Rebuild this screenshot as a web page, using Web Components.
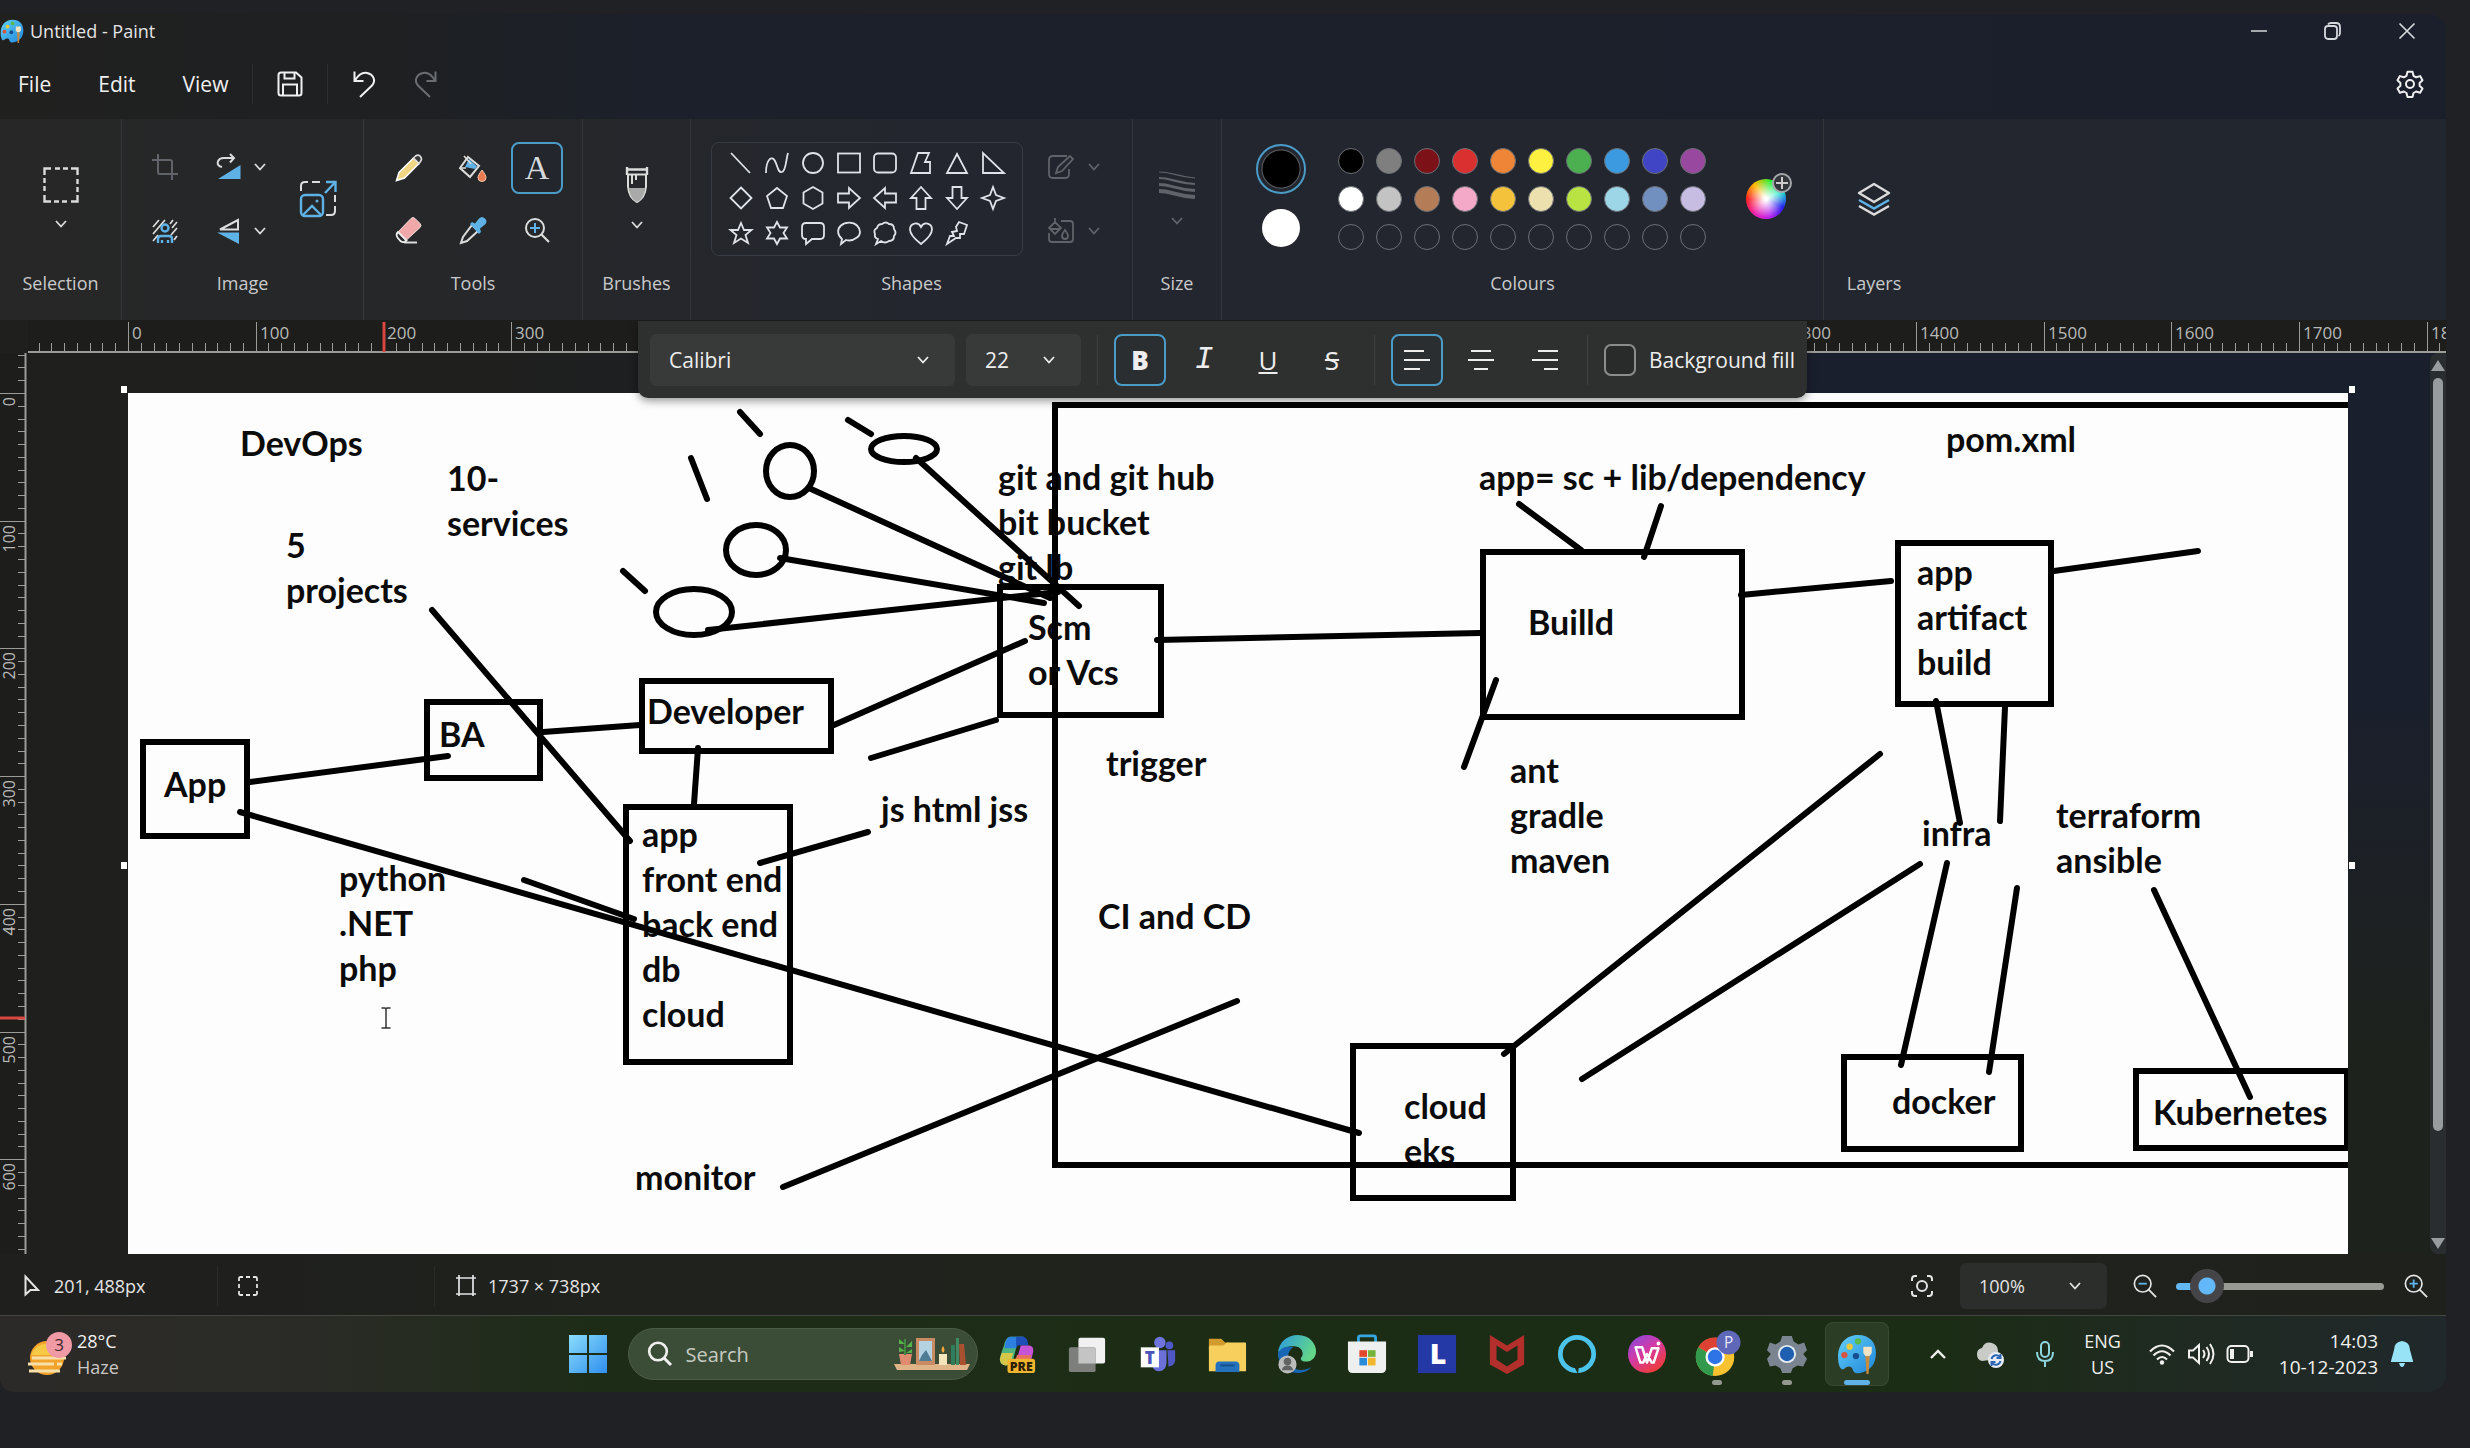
<!DOCTYPE html>
<html lang="en">
<head>
<meta charset="utf-8">
<title>Untitled - Paint</title>
<style>
  html, body { margin: 0; height: 100%; background: #202125; }
  body { font-family: "Open Sans", "Noto Sans", sans-serif; font-size: 18px; color: #e4e4e4; }
</style>
</head>
<body>
<paint-desktop>
  <paint-window></paint-window>
  <task-bar></task-bar>
</paint-desktop>
<script>
const BASE = `
  * { box-sizing: border-box; }
  button { all: unset; box-sizing: border-box; display: flex; align-items: center; justify-content: center; cursor: default; }
  select, input { font: inherit; color: inherit; }
`;
function define(name, render, after) {
  customElements.define(name, class extends HTMLElement {
    connectedCallback() {
      if (this.shadowRoot) return;
      const root = this.attachShadow({ mode: 'open' });
      const t = document.createElement('template');
      t.innerHTML = render(this);
      root.append(t.content.cloneNode(true));
      if (after) after(this, root);
    }
  });
}

/* ---------- icons ---------- */
const BLUE = '#5fb2e6';
const ICONS = {
  chev: [14, 14, '<path d="M2 4l5 5.5L12 4" stroke-width="1.8"/>'],
  caret: [18, 14, '<path d="M2 11l7-7 7 7" stroke-width="2.4"/>'],
  palette: [38, 38, `<defs><linearGradient id="p" x1="0" y1="0" x2="1" y2="1"><stop offset="0" stop-color="#62d0f5"/><stop offset="1" stop-color="#1f86dc"/></linearGradient></defs>
    <path d="M20 1C8 1 1 10 1 22c0 9 3 13 6 11 3-3 7-3 8 1 1 3 3 4 7 3 10-2 15-9 15-19S31 1 20 1z" fill="url(#p)" stroke="none"/>
    <circle cx="7" cy="20" r="3" fill="#d8543e" stroke="none"/><circle cx="12" cy="12" r="3" fill="#e9c93b" stroke="none"/><circle cx="20" cy="7" r="3" fill="#57b94e" stroke="none"/><circle cx="18" cy="21" r="3" fill="#174d8f" stroke="none"/>
    <path d="M25 12h8v6l-2 3h-4l-2-3z" fill="#f1e3c4" stroke="none"/><path d="M27 21h4l-1 17h-2z" fill="#c88a3d" stroke="none"/>`],
  min: [18, 18, '<path d="M1 9h16" stroke-width="1.6"/>'],
  restore: [18, 18, '<rect x="1" y="4" width="12" height="13" rx="3" stroke-width="1.8"/><path d="M4 2.5C5 1 6 1 7 1h5c3 0 4 2 4 4v6c0 2-.5 2.500-1.500 3" stroke-width="1.800"/>'],
  close: [18, 18, '<path d="M1.500 1.500l15 15M16.500 1.500l-15 15" stroke-width="1.700"/>'],
  gear: [28, 28, '<path d="M11.500 1.800h5l1 4 2.600 1.500 4-1.200 2.400 4.200-2.900 2.700v2.800l2.900 2.700-2.400 4.200-4-1.200-2.600 1.500-1 4h-5l-1-4-2.600-1.500-4 1.200-2.400-4.200 2.900-2.700V13L1.500 10.300l2.400-4.200 4 1.200 2.600-1.500z" stroke-width="2" stroke-linejoin="round"/><circle cx="14" cy="14" r="4" stroke-width="2"/>'],
  save: [26, 26, '<path d="M4 1.500h15l5.500 5V22c0 2-1 2.500-2.500 2.500H4C2 24.500 1.500 23 1.500 22V4C1.500 2.500 2.500 1.500 4 1.500z" stroke-width="2"/><path d="M7.500 2v5.500h10V2M6 24V13.500h14V24" stroke-width="2"/>'],
  undo: [26, 28, '<path d="M2.500 1.500v9.500h9M3 10.500c3-5 7-8.500 12-7.500 7 1.500 9 8 5 12.500L8 27" stroke-width="2"/>'],
  redo: [26, 28, '<path d="M23.500 1.500v9.500h-9M23 10.500c-3-5-7-8.500-12-7.500-7 1.500-9 8-5 12.500L18 27" stroke-width="2"/>'],
  select: [36, 36, '<path d="M1.500 8V1.500H8M12 1.500h5M20 1.500h5M28 1.500h6.500V8M34.500 12v5M34.500 20v5M34.500 28v6.500H28M24 34.500h-5M16 34.500h-5M8 34.500H1.500V28M1.500 24v-5M1.500 16v-5" stroke-width="2.400"/>'],
  selsmall: [20, 20, '<path d="M1 5V2.500Q1 1 2.500 1H5M8 1h4M15 1h2.500Q19 1 19 2.500V5M19 8v4M19 15v2.500q0 1.500-1.500 1.500H15M12 19H8M5 19H2.500Q1 19 1 17.500V15M1 12V8" stroke-width="1.800"/>'],
  crop: [26, 26, '<path d="M6 0v18q0 2 2 2h18M0 6h18q2 0 2 2v18" stroke-width="2"/>'],
  rotate: [26, 26, `<path d="M6 13C-1 12 1 4 8 4h9M14 0l4 4-4 4.500" stroke-width="2"/><path d="M24.500 11v14H2z" fill="${BLUE}" stroke="none"/>`],
  flip: [26, 26, `<path d="M22 2v9.500H4z" stroke-width="2"/><path d="M23 14.500V26L1 14.500z" fill="${BLUE}" stroke="none"/>`],
  removebg: [26, 24, `<path d="M1 8l6-7M1 15L13 1M1 22l5-6M18 5l3-4M20 9l5-6M19 16l6-7M22 21l3-4" stroke-width="1.700"/><circle cx="13" cy="9" r="3.500" stroke="${BLUE}" stroke-width="2.400"/><path d="M6 24v-4q0-3 3-3h8q3 0 3 3v4M10 24v-3M16 24v-3" stroke="${BLUE}" stroke-width="2.400"/>`],
  resize: [38, 38, `<path d="M2 11V6q0-4 4-4h3M13 2h8M36 15v7M36 26v5q0 4-4 4h-5" stroke-width="2"/><rect x="2" y="15" width="22" height="21" rx="4" stroke="${BLUE}" stroke-width="2.400"/><path d="M4 35l9-9 9 9M26 13L36 2.500M27 2h9.500v10" stroke="${BLUE}" stroke-width="2.400"/><circle cx="18" cy="21" r="1.500" fill="${BLUE}" stroke="none"/>`],
  pencil: [28, 28, '<path d="M1.500 26.500l2.500-8L18.500 4l5.500 5.500L9.500 24z" fill="#f0d584" stroke="#fff" stroke-width="1.500"/><path d="M18.500 4l2-2q3-2 5 .5t0 5l-1.500 2z" fill="#3a3a3a" stroke="#ddd" stroke-width="1.600"/>'],
  bucket: [30, 28, `<path d="M10 3l11 9-9 11L2 14z" stroke-width="2"/><path d="M11 5l8 7.500-2 2.500-10-2z" fill="${BLUE}" stroke="none"/><path d="M6 2l7 8M2 14h6" stroke-width="1.600"/><path d="M24 16c3 4 4 6 4 7.500a4 4 0 0 1-8 0c0-1.500 1-3.500 4-7.500z" fill="#ea7a4f" stroke="#f6c6ac" stroke-width="1"/>`],
  eraser: [28, 28, '<path d="M3 16L16 2.500q2-2 4 0l5 5q2 2 0 4L11.500 24z" fill="#f0a8a8" stroke="#f6dcdc" stroke-width="1"/><path d="M3 16l8.500 8.500q-3 3-6 .5l-3-3.500q-2-3 .5-5.500z" fill="#26282a" stroke="#eee" stroke-width="1.800"/><path d="M9 26.500h13" stroke-width="1.800"/>'],
  dropper: [28, 28, `<path d="M13 9l6 6L8 25l-6 2 2-6z" stroke-width="2"/><path d="M11 8l2-2 3 1.500 4-5q3-3 6 0t0 6l-5 4L22 16l-2 2z" fill="${BLUE}" stroke="none"/>`],
  zoomt: [26, 26, `<circle cx="11" cy="11" r="9" stroke-width="2"/><path d="M17.500 17.500L25 25" stroke-width="2.200"/><path d="M11 6v10M6 11h10" stroke="${BLUE}" stroke-width="2"/>`],
  brush: [24, 38, '<path d="M2 1v8M22 1v8M1.500 3.500h21" stroke-width="2.400"/><path d="M3 8.500v12Q4 32 12 36q8-4 9-15.500v-12zM7 9v9M11 9v5" stroke-width="2"/><path d="M4 22h16q-1 11-8 14-7-3-8-14z" fill="#a9a9a9" stroke="none"/>'],
  line: [24, 24, '<path d="M2 2l19 20"/>'],
  curve: [24, 24, '<path d="M1 22C1 8 7 4 10 10s3 12 7 11S21 8 23 2"/>'],
  oval: [24, 24, '<circle cx="12" cy="12" r="10"/>'],
  rect: [24, 24, '<rect x="1" y="2.500" width="22" height="19"/>'],
  rrect: [24, 24, '<rect x="1" y="2.500" width="22" height="19" rx="4"/>'],
  poly: [24, 24, '<path d="M9 2h11l-4 9h5v11H2z"/>'],
  tri: [24, 24, '<path d="M12 3l10 19H2z"/>'],
  rtri: [24, 24, '<path d="M2 2v20h21z"/>'],
  diamond: [24, 24, '<path d="M12 1.500L22.500 12 12 22.500 1.500 12z"/>'],
  penta: [24, 24, '<path d="M12 2l10 8-4 12H6L2 10z"/>'],
  hexa: [24, 24, '<path d="M12 1l9.500 5.500v11L12 23l-9.500-5.500v-11z"/>'],
  right: [24, 24, '<path d="M1 7.500h11V2l11 10-11 10v-5.500H1z"/>'],
  left: [24, 24, '<path d="M23 7.500H12V2L1 12l11 10v-5.500h11z"/>'],
  up: [24, 24, '<path d="M7.500 23V12H2L12 1l10 11h-5.500v11z"/>'],
  down: [24, 24, '<path d="M7.500 1v11H2l10 11 10-11h-5.500V1z"/>'],
  star4: [24, 24, '<path d="M12 1l3 8 8 3-8 3-3 8-3-8-8-3 8-3z"/>'],
  star5: [24, 24, '<path d="M12 2l3 7h7.500l-6 5 2.500 8-7-4.500L5 22l2.500-8-6-5H9z"/>'],
  star6: [24, 24, '<path d="M12 1l3 5.500h7L18.500 12l3.500 5.500h-7L12 23l-3-5.500H2L5.500 12 2 6.500h7z"/>'],
  rcall: [24, 24, '<path d="M5 2h14q4 0 4 4v8q0 4-4 4h-8l-6 5v-5q-4 0-4-4V6q0-4 4-4z"/>'],
  ocall: [24, 24, '<path d="M5 18C0 14 0 8 4 4.500s12-4 16 0 4 9 0 12-8 3.500-11 2.500L4 23z"/>'],
  ccall: [24, 24, '<path d="M5 18q-4-1-3-5-2-4 2-6 1-4 5-4 4-3 7 0 5 0 5 5 3 4 0 7 0 5-5 5-4 3-8 0l-5 3z"/>'],
  heart: [24, 24, '<path d="M12 23C3 16 1 12 1 8.500 1 2 9 0 12 6c3-6 11-4 11 2.500C23 12 21 16 12 23z"/>'],
  bolt: [24, 24, '<path d="M14 1l8 3-3 9h-4v4h-4L2 23l3-8h4l-2-4 5-1-1-4z"/>'],
  outline: [28, 28, '<path d="M20 3H6Q2 3 2 7v14q0 4 4 4h12q4 0 4-4v-5"/><path d="M9 20l2-6L23 3l3 3-11 12z"/>'],
  fillb: [28, 28, '<path d="M14 4h9q3 0 3 3v15q0 3-3 3H5q-3 0-3-3v-6"/><path d="M8 1v6M2 11l6-6 6 6-6 6zM3 12h10"/><path d="M18 13q3 4 3 6a3 3 0 0 1-6 0q0-2 3-6z"/>'],
  sizes: [38, 30, '<path d="M1 2c13 0 16 4 36 6" stroke-width="1.200"/><path d="M1 8c13 0 16 5 36 6" stroke-width="2.200"/><path d="M1 14.500c13 0 16 5 36 6" stroke-width="3"/><path d="M1 21c13 0 16 5 36 6" stroke-width="4"/>'],
  layers: [34, 34, `<path d="M17 2L32 11 17 20 2 11z" stroke-width="2.400" stroke-linejoin="round"/><path d="M2 18l15 8.500L32 18" stroke="${BLUE}" stroke-width="2.400"/><path d="M2 24l15 8.500L32 24" stroke-width="2.400"/>`],
  alignl: [26, 22, '<path d="M0 2h20M0 11h26M0 20h16" stroke-width="2"/>'],
  alignc: [26, 22, '<path d="M3 2h20M0 11h26M6 20h14" stroke-width="2"/>'],
  alignr: [26, 22, '<path d="M6 2h20M0 11h26M12 20h14" stroke-width="2"/>'],
  cursor: [16, 22, '<path d="M1.500 1.500v18l5-4.500H14z" stroke-width="2"/>'],
  dims: [20, 22, '<path d="M3 0v21M17 0v21M0 3h20M0 19h20" stroke-width="1.700"/>'],
  focus: [24, 24, '<path d="M2 7V5q0-3 3-3h2M17 2h2q3 0 3 3v2M22 17v2q0 3-3 3h-2M7 22H5q-3 0-3-3v-2" stroke-width="2"/><circle cx="12" cy="12" r="5" stroke-width="2"/>'],
  zout: [26, 26, `<circle cx="10.500" cy="10.500" r="9" stroke-width="1.800"/><path d="M17 17l8 8" stroke-width="2"/><path d="M6 10.500h9" stroke="${BLUE}" stroke-width="2"/>`],
  zin: [26, 26, `<circle cx="10.500" cy="10.500" r="9" stroke-width="1.800"/><path d="M17 17l8 8" stroke-width="2"/><path d="M6 10.500h9M10.500 6v9" stroke="${BLUE}" stroke-width="2"/>`],
  haze: [44, 46, '<circle cx="19" cy="27" r="17" fill="#f2a32c" stroke="none"/><path d="M3 24a17 17 0 0 1 32 0z" fill="#f6c945" stroke="none"/><path d="M4 27h34M0 33h26M29 33h5M1 40h31" stroke="#f7dfa8" stroke-width="3"/><circle cx="31" cy="14" r="13" fill="#f09aa6" stroke="none"/><text x="31" y="20" font-size="17" text-anchor="middle" fill="#42262b" stroke="none">3</text>'],
  windows: [38, 38, '<defs><linearGradient id="w" x1="0" y1="0" x2="1" y2="1"><stop offset="0" stop-color="#8adcfb"/><stop offset="1" stop-color="#2f8fee"/></linearGradient></defs><path d="M0 0h18v18H0zM20 0h18v18H20zM0 20h18v18H0zM20 20h18v18H20z" fill="url(#w)" stroke="none"/>'],
  search: [26, 26, '<circle cx="11" cy="10.500" r="8.800" stroke-width="2.600"/><path d="M17 17l7 7" stroke-width="3"/>'],
  shelf: [76, 36, '<g stroke="none"><path d="M0 28h76l-3 6H3z" fill="#dfb489"/><path d="M5 18h13l-2 11H7z" fill="#e08a70"/><path d="M10 19V3h2v16z" fill="#3f8a3c"/><path d="M11 8L5 3v5zM12 11l6-6v6zM11 15l-6-4v5zM12 17l6-4v4z" fill="#56b04c"/><rect x="22" y="2" width="19" height="27" fill="#c98b62"/><rect x="25" y="5" width="13" height="20" fill="#b5d2e2"/><path d="M25 25l3-6 4-5 6 11z" fill="#4e7c94"/><rect x="45" y="18" width="8" height="11" fill="#f4e4bb"/><path d="M49 10q3 4 0 7-3-3 0-7z" fill="#f2a83a"/><rect x="57" y="9" width="4" height="20" fill="#2f7d5b"/><path d="M62 2h3v27h-3z" fill="#3f8a64"/><path d="M65 8h5l2 21h-6z" fill="#a9502f"/></g>'],
  copilot: [42, 42, '<g stroke="none"><path d="M14 3h14q-6 3-8 12l-3 12q-2 6-7 6-7 0-7-6 0-4 4-14 2-10 7-10z" fill="#4fb37c"/><path d="M14 3h14q-6 3-8 12H8q1-12 6-12z" fill="#2d7fe0"/><path d="M20 3h8q4 1 5 9h-8q-3-1-5 2z" fill="#1e4fb8"/><path d="M3 26q1-3 2-6h12l-2 7q-2 6-6 6-6-1-6-7z" fill="#d4c74a"/><path d="M25 12h8q6 0 5 7l-3 12q-2 4-6 4H15q4-1 6-9z" fill="#c554d6"/><path d="M21 22h15l-3 9H18z" fill="#e8705f"/><rect x="11" y="26" width="29" height="15" rx="3" fill="#f0b52c"/><text x="25.500" y="38.500" font-size="13" font-weight="800" text-anchor="middle" fill="#2b2008">PRE</text></g>'],
  taskview: [42, 42, '<g stroke="none"><rect x="12" y="4" width="28" height="27" rx="2" fill="#f1f1f1"/><rect x="2" y="14" width="28" height="26" rx="2" fill="#7d7f7c"/><path d="M12 14h18v17H12z" fill="#c4c4c4"/></g>'],
  teams: [42, 42, '<g stroke="none"><circle cx="24" cy="9" r="6" fill="#6f75dc"/><circle cx="34" cy="12" r="4" fill="#5059c9"/><path d="M18 17h13v14q-1 8-8 8t-7-8z" fill="#6a70d8"/><path d="M32 17h8v11q-1 6-7 6z" fill="#4f57c4"/><rect x="4" y="14" width="19" height="21" fill="#fff"/><text x="13.500" y="31" font-size="18" font-weight="800" text-anchor="middle" fill="#4b53bc">T</text></g>'],
  folder: [42, 42, '<g stroke="none"><path d="M2 5h13l4 4h4v8H2z" fill="#d39b2e"/><path d="M2 13q0-1 1-1h14l4-3h19q1 0 1 1v29H2z" fill="#f7cf5c"/><path d="M9 40V33q0-4 4-4h17q4 0 4 4v7z" fill="#2472bd"/><path d="M14 33h15" stroke="#174f88" stroke-width="2"/></g>'],
  edge: [42, 42, '<defs><linearGradient id="e" x1="0" y1="0" x2="1" y2=".4"><stop offset="0" stop-color="#2a9be0"/><stop offset="1" stop-color="#63d68a"/></linearGradient></defs><g stroke="none"><path d="M1 20C2 8 11 1 22 1c12 0 19 9 19 17 0 8-6 11-11 11s-6-3-4-5c2-3 1-10-6-11C11 12 4 15 1 20z" fill="url(#e)"/><path d="M1 20c4-6 10-8 16-6-6 4-7 12-3 18s12 8 22 3C27 46 1 42 1 20z" fill="#1867b5"/><circle cx="11" cy="32" r="9.500" fill="#b9bcbb"/><circle cx="11" cy="29" r="4" fill="#616362"/><path d="M5 38q1-5 6-5t6 5z" fill="#616362"/></g>'],
  store: [42, 42, '<path d="M12 10V4q0-2 2-2h14q2 0 2 2v6" stroke="#35a5e2" stroke-width="3"/><g stroke="none"><path d="M1 8h40v28q0 5-5 5H6q-5 0-5-5z" fill="#eef0ef"/><path d="M13 17h8v7h-8z" fill="#e2492b"/><path d="M22 17h8v7h-8z" fill="#74b43a"/><path d="M13 25h8v8h-8z" fill="#2a8bd8"/><path d="M22 25h8v8h-8z" fill="#f2b62d"/></g>'],
  ell: [42, 42, '<rect x="1" y="1" width="40" height="40" fill="#2438a6" stroke="none"/><text x="22" y="32" font-size="30" font-weight="800" text-anchor="middle" fill="#fff" stroke="none">L</text>'],
  mcafee: [42, 42, '<path d="M3 1l18 11L39 1v31l-18 10L3 32z" fill="#b32f2c" stroke="none"/><path d="M10 12l11 7 11-7v15l-11 7-11-7z" fill="#1c2d16" stroke="none"/>'],
  alexa: [42, 42, '<circle cx="21" cy="21" r="17.500" stroke="#4cc3ea" stroke-width="5"/><path d="M18 34l4 8 1-8z" fill="#1c2d16" stroke="none"/>'],
  wps: [42, 42, '<defs><linearGradient id="k" x1="0" y1="0" x2=".7" y2="1"><stop offset="0" stop-color="#7d4be8"/><stop offset=".5" stop-color="#d43aa4"/><stop offset="1" stop-color="#ee3d35"/></linearGradient></defs><circle cx="21" cy="21" r="20" fill="url(#k)" stroke="none"/><path d="M9 14h7l5 16 5-15h7l-5 15h-2l-5-9-4 9h-3L9 14z" stroke="#fff" stroke-width="2.600" stroke-linejoin="round"/><circle cx="33" cy="10" r="2" fill="#fff" stroke="none"/>'],
  chrome: [50, 50, '<g stroke="none"><circle cx="23" cy="28" r="20" fill="#f6c230"/><path d="M23 28L5.500 18a20 20 0 0 1 35 0z" fill="#dc4134"/><path d="M23 28L5.500 18a20 20 0 0 0 15 30z" fill="#339a4d"/><circle cx="23" cy="28" r="10" fill="#fff"/><circle cx="23" cy="28" r="7.600" fill="#2f74e6"/><circle cx="37" cy="13" r="12.500" fill="#5f68b8"/><text x="37" y="19" font-size="16" text-anchor="middle" fill="#e3e6f7">P</text></g>'],
  settings: [42, 42, '<g stroke="none"><path d="M16 2h10l2 6 5 3 6-2 3 8-4 4v0l4 5-4 8-6-1-5 3-2 5H16l-2-5-5-3-6 1-3-8 4-5-4-4 3-8 6 2 5-3z" fill="#7b8591"/><circle cx="21" cy="21" r="9.500" fill="#e4ebf2"/><circle cx="21" cy="21" r="7.500" fill="#1f5fb0"/></g>'],
  cloud: [30, 30, '<g stroke="none"><path d="M6 22q-5-1-5-7 0-5 5-6 3-7 10-5 6 2 6 8v8z" fill="#c9cbc7"/><circle cx="20" cy="21" r="8" fill="#e9eef5"/></g><path d="M15.500 20a5 5 0 0 1 9-1.500M24.500 22a5 5 0 0 1-9 1.500M24.500 15v4h-4M15.500 27v-4h4" stroke="#2c66b5" stroke-width="2"/>'],
  mic: [20, 28, '<rect x="6" y="2" width="8" height="15" rx="4" stroke="#8fd6de" stroke-width="2"/><path d="M2 12q0 9 8 9t8-9M10 21v6" stroke="#8fd6de" stroke-width="2"/>'],
  wifi: [28, 22, '<path d="M2 8.500q12-12 24 0M5.500 12.500q8.500-8.500 17 0M9 16.500q5-5 10 0" stroke-width="2.200"/><circle cx="14" cy="19.500" r="2.200" fill="currentColor" stroke="none"/>'],
  vol: [28, 24, '<path d="M2 8.500h4l6-5.500v18l-6-5.500H2z" stroke-width="2"/><path d="M16 8q3 4 0 8M19.500 5q5 7 0 14M23 2q7 10 0 20" stroke-width="2"/>'],
  bat: [28, 20, '<rect x="1.500" y="2" width="21" height="16" rx="4" stroke-width="2"/><path d="M4 5h4v10H4z" fill="currentColor" stroke="none"/><path d="M25.500 7v6" stroke-width="3"/>'],
  bell: [22, 26, '<path d="M11 0q8 1 8 9l3 11v1H0v-1l3-11q0-8 8-9zM8 22h6q-1 4-3 4t-3-4z" fill="#98e3f6" stroke="none"/>'],
};
define('ui-icon', el => {
  const [w, h, body] = ICONS[el.getAttribute('name')];
  const dw = el.getAttribute('width') || w, dh = Math.round(dw * h / w);
  return `<style>:host{display:inline-flex;flex:none}svg{display:block;overflow:visible}</style>
  <svg width="${dw}" height="${dh}" viewBox="0 0 ${w} ${h}" fill="none" stroke="currentColor" stroke-width="1.8" aria-hidden="true">${body}</svg>`;
});

/* ---------- page frame ---------- */
define('paint-desktop', () => `<style>
  :host { display: flex; flex-direction: column; height: 100vh; box-sizing: border-box; padding: 14px 24px 56px 0; background: #202125; }
  .screen { flex: 1; min-height: 0; display: flex; flex-direction: column; overflow: hidden; border-radius: 0 18px 18px 14px; }
</style><div class="screen"><slot></slot></div>`);

define('paint-window', () => `<style>
  :host { flex: 1; min-height: 0; display: flex; flex-direction: column;
    background: linear-gradient(90deg, #20201f 0, #1e2022 16%, #1b202b 28%, #1a1f2b 100%); }
</style>
<title-bar></title-bar><menu-bar></menu-bar><paint-ribbon></paint-ribbon><paint-workspace></paint-workspace><status-bar></status-bar>`);

define('title-bar', () => `<style>${BASE}
  :host { display: flex; align-items: center; height: 34px; padding-right: 30px; }
  .name { margin-left: 6px; flex: 1; }
  .ctl { display: flex; gap: 56px; color: #d5d8dd; }
</style>
<ui-icon name="palette" width="24"></ui-icon><span class="name">Untitled - Paint</span>
<div class="ctl"><button aria-label="Minimise"><ui-icon name="min"></ui-icon></button><button aria-label="Restore"><ui-icon name="restore"></ui-icon></button><button aria-label="Close"><ui-icon name="close"></ui-icon></button></div>`);

define('menu-bar', () => `<style>${BASE}
  :host { display: flex; align-items: center; height: 70px; padding: 1px 22px 0 18px; font-size: 21px; color: #f0f0f0; }
  nav { display: flex; gap: 47px; }
  i { width: 1px; height: 40px; background: #2b2d2f; margin: 0 24px; }
  .redo { color: #6a6d71; margin-left: 34px; }
  .gear { margin-left: auto; }
</style>
<nav><button>File</button><button>Edit</button><button>View</button></nav>
<i></i><button aria-label="Save"><ui-icon name="save"></ui-icon></button><i></i>
<button aria-label="Undo"><ui-icon name="undo"></ui-icon></button><button class="redo" aria-label="Redo"><ui-icon name="redo"></ui-icon></button>
<button class="gear" aria-label="Settings"><ui-icon name="gear"></ui-icon></button>`);

/* ---------- ribbon ---------- */
define('ribbon-group', el => `<style>${BASE}
  :host { display: flex; flex-direction: column; align-items: center; flex: none; position: relative; padding: 23px 0; }
  .body { height: 114px; display: flex; align-items: center; justify-content: center; width: 100%; }
  .label { margin-top: 13px; line-height: 28px; color: #c9cacb; }
  :host(:not([last])) { border-right: 1px solid #33363b; }
</style><div class="body"><slot></slot></div><div class="label">${el.getAttribute('label')}</div>`);

const SHAPES = 'line curve oval rect rrect poly tri rtri diamond penta hexa right left up down star4 star5 star6 rcall ocall ccall heart bolt'.split(' ');
const COLOURS = '#000000 #7f7f7f #7d1118 #db3030 #ef8537 #fdf040 #4caf50 #3b9ae0 #3f45c4 #98489f #ffffff #c3c3c3 #b57c58 #f4a9c8 #f5c33b #ebe0ae #b9e243 #9dd6e6 #7190c0 #c7bde3'.split(' ');

define('paint-ribbon', () => `<style>${BASE}
  :host { display: flex; flex: none; color: #dcdcdc; background: linear-gradient(90deg, #272727 0, #25272a 22%, #23262f 40%, #22262f 100%); }
  .col { display: flex; flex-direction: column; align-items: center; gap: 14px; }
  .dim { color: #606369; }
  .sel { width: 122px; } .img { width: 242px; } .tls { width: 219px; } .brs { width: 108px; }
  .shp { width: 442px; } .siz { width: 89px; } .cls { width: 602px; } .lay { width: 100px; }
  .image { display: grid; grid-template-columns: 64px 37px 46px 38px; grid-template-rows: 52px 52px; row-gap: 12px; align-items: center; justify-items: start; margin-left: 4px; }
  .image .big { grid-area: 1 / 4 / 3 / 5; }
  .tools { display: grid; grid-template-columns: repeat(3, 52px); grid-template-rows: 52px 52px; gap: 10px 12px; }
  .on { border: 2px solid #4a9cc7; border-radius: 8px; background: #23272d; font: 34px "Liberation Serif", serif; color: #d6dadd; }
  .gallery { display: grid; grid-template-columns: repeat(8, 24px); align-content: start; gap: 11px 12px; padding: 8px 17px; width: 312px; height: 114px; border: 1px solid #363b44; border-radius: 8px; color: #dfe2e8; }
  .opts { display: grid; grid-template-columns: 28px 14px; gap: 36px 12px; margin: 0 12px 0 24px; align-items: center; }
  .pair { display: flex; flex-direction: column; align-items: center; gap: 15px; margin: 0 32px 8px 0; }
  .pri { width: 50px; height: 50px; border-radius: 50%; border: 2px solid #4a9cc7; background: radial-gradient(circle, #000 18px, #5b5e60 19px, #23262f 20px); }
  .sec { width: 38px; height: 38px; border-radius: 50%; background: #fff; }
  .sw { display: grid; grid-template-columns: repeat(10, 26px); gap: 12px; }
  .sw button { width: 26px; height: 26px; border-radius: 50%; border: 1px solid #6b6f75; }
  .wheel { position: relative; width: 40px; height: 40px; border-radius: 50%; margin: 0 4px 0 40px; background: radial-gradient(circle, #fff 5%, #fff0 65%), conic-gradient(from 270deg, #f22, #fb0, #3e3, #2ec, #22e, #b2e, #e2a, #f22); }
  .wheel b { position: absolute; right: -6px; top: -6px; width: 20px; height: 20px; border-radius: 50%; border: 2px solid #a5a8aa; background: linear-gradient(#ccc, #ccc) 50% 50% / 12px 2px no-repeat, linear-gradient(#ccc, #ccc) 50% 50% / 2px 12px no-repeat, #33363b; }
</style>
<ribbon-group class="sel" label="Selection"><button class="col" aria-label="Select"><ui-icon name="select"></ui-icon><ui-icon name="chev"></ui-icon></button></ribbon-group>
<ribbon-group class="img" label="Image"><div class="image">
  <button class="dim" aria-label="Crop"><ui-icon name="crop"></ui-icon></button><button aria-label="Rotate"><ui-icon name="rotate"></ui-icon></button><ui-icon name="chev"></ui-icon>
  <button class="big" aria-label="Resize"><ui-icon name="resize"></ui-icon></button>
  <button aria-label="Remove background"><ui-icon name="removebg"></ui-icon></button><button aria-label="Flip"><ui-icon name="flip"></ui-icon></button><ui-icon name="chev"></ui-icon>
</div></ribbon-group>
<ribbon-group class="tls" label="Tools"><div class="tools">
  <button aria-label="Pencil"><ui-icon name="pencil"></ui-icon></button><button aria-label="Fill"><ui-icon name="bucket"></ui-icon></button><button class="on" aria-label="Text">A</button>
  <button aria-label="Eraser"><ui-icon name="eraser"></ui-icon></button><button aria-label="Colour picker"><ui-icon name="dropper"></ui-icon></button><button aria-label="Magnifier"><ui-icon name="zoomt"></ui-icon></button>
</div></ribbon-group>
<ribbon-group class="brs" label="Brushes"><button class="col" aria-label="Brushes"><ui-icon name="brush"></ui-icon><ui-icon name="chev"></ui-icon></button></ribbon-group>
<ribbon-group class="shp" label="Shapes"><div class="gallery">${SHAPES.map(s => `<button aria-label="${s}"><ui-icon name="${s}"></ui-icon></button>`).join('')}</div>
  <div class="opts dim"><ui-icon name="outline"></ui-icon><ui-icon name="chev"></ui-icon><ui-icon name="fillb"></ui-icon><ui-icon name="chev"></ui-icon></div></ribbon-group>
<ribbon-group class="siz" label="Size"><button class="col dim" aria-label="Size"><ui-icon name="sizes"></ui-icon><ui-icon name="chev"></ui-icon></button></ribbon-group>
<ribbon-group class="cls" label="Colours"><div class="pair"><button class="pri" aria-label="Colour 1"></button><button class="sec" aria-label="Colour 2"></button></div>
  <div class="sw">${Array.from({ length: 30 }, (_, i) => `<button aria-label="Swatch ${i + 1}" style="background:${COLOURS[i] || 'none'}"></button>`).join('')}</div>
  <button class="wheel" aria-label="Edit colours"><b></b></button></ribbon-group>
<ribbon-group class="lay" label="Layers" last><button aria-label="Layers"><ui-icon name="layers"></ui-icon></button></ribbon-group>`);

/* ---------- rulers ---------- */
const UNIT = 127.7;
define('paint-ruler', el => {
  const vert = el.hasAttribute('vertical'), origin = +el.getAttribute('origin');
  const count = vert ? 7 : 19, mark = +el.getAttribute('mark');
  let s = '';
  for (let i = -10; i < count * 10; i++) {
    const p = Math.round(origin + i * UNIT / 10);
    if (p < 0) continue;
    const major = i % 10 === 0 && i >= 0;
    s += vert ? `<path d="M${major ? 0 : 18} ${p}.5H25"/>` : `<path d="M${p}.5 ${major ? 2 : 23}V32"/>`;
    if (major) s += vert ? `<text transform="translate(15 ${p + 4}) rotate(-90)" text-anchor="end">${i * 10}</text>` : `<text x="${p + 4}" y="19">${i * 10}</text>`;
  }
  s += vert ? `<path d="M25.5 0V2000" stroke-width="2"/><path class="m" d="M0 ${mark}H25"/>` : `<path d="M0 32H4000" stroke-width="2"/><path class="m" d="M${mark} 2V32"/>`;
  return `<style>
    :host { display: block; overflow: hidden; flex: none; background: #1d1d1c; ${vert ? 'width: 28px;' : 'height: 33px; margin-left: 28px;'} }
    svg { display: block; width: 100%; height: 100%; } path { stroke: #9b9c98; fill: none; } .m { stroke: #d9473f; stroke-width: 3; }
    text { font-size: ${vert ? 16 : 17}px; fill: #b9bab8; }
  </style><svg>${s}</svg>`;
});

/* ---------- text toolbar ---------- */
define('pick-list', el => `<style>${BASE}
  :host { display: grid; align-items: center; }
  select { grid-area: 1/1; appearance: none; width: 100%; height: 100%; border: 0; border-radius: 6px; background: var(--pick, #383a3a); padding: 0 0 0 19px; outline: 0; }
  ui-icon { grid-area: 1/1; justify-self: end; margin-right: 25px; pointer-events: none; }
</style><select aria-label="${el.getAttribute('label')}"><option>${el.getAttribute('value')}</option></select><ui-icon name="chev"></ui-icon>`);

define('text-toolbar', () => `<style>${BASE}
  :host { display: flex; align-items: center; height: 77px; padding: 0 12px; border-radius: 0 0 10px 10px; background: #2e302f; font-size: 21px; color: #ededed; box-shadow: 0 3px 8px #0006; }
  pick-list { height: 52px; } .font { width: 305px; } .size { width: 115px; margin-left: 11px; }
  i { width: 1px; height: 50px; background: #3d3f3e; margin: 0 16px; flex: none; }
  .set { display: flex; gap: 12px; }
  .set button { width: 52px; height: 52px; border: 2px solid transparent; border-radius: 8px; font-size: 26px; }
  .set .on { border-color: #4a9cc7; background: #2a2e31; }
  .set .b { font-weight: 800; } .set .it { font-family: "Liberation Mono", monospace; font-style: italic; font-size: 31px; } .set .u { text-decoration: underline; } .set .s { text-decoration: line-through; }
  label { display: flex; align-items: center; gap: 13px; white-space: nowrap; }
  input { appearance: none; width: 32px; height: 32px; margin: 0; border: 2px solid #8b8d8c; border-radius: 7px; background: #292b2a; }
</style>
<pick-list class="font" label="Font family" value="Calibri"></pick-list><pick-list class="size" label="Font size" value="22"></pick-list><i></i>
<div class="set"><button class="on b" aria-label="Bold">B</button><button class="it" aria-label="Italic">I</button><button class="u" aria-label="Underline">U</button><button class="s" aria-label="Strikethrough">S</button></div><i></i>
<div class="set"><button class="on" aria-label="Align left"><ui-icon name="alignl"></ui-icon></button><button aria-label="Align centre"><ui-icon name="alignc"></ui-icon></button><button aria-label="Align right"><ui-icon name="alignr"></ui-icon></button></div><i></i>
<label for="bg"><input type="checkbox" id="bg">Background fill</label>`);

/* ---------- drawing ---------- */
const NOTES = [
  [112, 27, 'DevOps'], [319, 62, '10-|services'], [158, 129, '5|projects'], [311, 318, 'BA'], [36, 368, 'App'],
  [519, 295, 'Developer'], [514, 418, 'app|front end|back end|db|cloud'], [211, 462, 'python|.NET|php'], [753, 393, 'js html jss'],
  [870, 61, 'git and git hub|bit bucket|git lb'], [900, 211, 'Scm|or Vcs'], [978, 347, 'trigger'], [970, 500, 'CI and CD'],
  [507, 761, 'monitor'], [1276, 690, 'cloud|eks'], [1351, 61, 'app= sc + lib/dependency'], [1818, 23, 'pom.xml'], [1400, 206, 'Builld'],
  [1789, 156, 'app|artifact|build'], [1382, 354, 'ant|gradle|maven'], [1794, 417, 'infra'], [1928, 399, 'terraform|ansible'],
  [1764, 685, 'docker'], [2025, 696, 'Kubernetes'],
];
const RECTS = [[143, 741, 247, 835], [427, 701, 540, 777], [642, 680, 831, 750], [626, 806, 790, 1061], [1000, 586, 1161, 714], [1055, 404, 2400, 1164],
  [1353, 1045, 1513, 1197], [1483, 551, 1742, 716], [1898, 542, 2051, 703], [1844, 1056, 2021, 1148], [2136, 1070, 2347, 1147]];
const OVALS = [[904, 448, 33, 13], [790, 470, 24, 26], [756, 549, 30, 25], [694, 611, 38, 23]];
const LINES = [[740, 411, 760, 433], [848, 419, 871, 433], [691, 457, 707, 498], [623, 570, 645, 590], [916, 457, 1079, 605], [811, 488, 1050, 597], [780, 557, 1044, 602],
  [708, 629, 1058, 591], [834, 724, 1025, 640], [871, 757, 996, 719], [760, 862, 868, 831], [698, 747, 694, 803], [783, 1186, 1237, 1000], [240, 811, 1359, 1132],
  [250, 781, 448, 755], [432, 609, 630, 840], [543, 731, 640, 724], [524, 879, 634, 918], [1157, 639, 1480, 632], [1519, 503, 1581, 549], [1661, 505, 1644, 556],
  [1741, 594, 1891, 580], [2054, 570, 2198, 550], [1496, 679, 1464, 766], [1880, 753, 1504, 1053], [1920, 863, 1582, 1078], [1936, 700, 1960, 822], [2005, 706, 2000, 820],
  [1947, 862, 1901, 1064], [2017, 887, 1989, 1071], [2154, 889, 2250, 1096]];
define('paint-canvas', () => `<style>
  :host { display: block; position: relative; flex: none; width: 2220px; height: 942px; background: #fdfdfd; color: #0b0b0b; }
  p { position: absolute; margin: 0; font: bold 34px/45px Lato, Carlito, sans-serif; white-space: nowrap; }
  svg { position: absolute; inset: 0; width: 100%; height: 100%; }
  b { position: absolute; width: 6px; height: 7px; background: #fff; }
  .l { left: -7px; } .r { right: -7px; } .t { top: -7px; } .m { top: 469px; }
</style>
${NOTES.map(([x, y, t]) => `<p style="left:${x}px;top:${y}px">${t.split('|').join('<br>')}</p>`).join('')}
<svg viewBox="128 392 2220 942" fill="none" stroke="#000" stroke-width="6" stroke-linecap="round">
${RECTS.map(([a, b, c, d]) => `<rect x="${a}" y="${b}" width="${c - a}" height="${d - b}"/>`).join('')}
${OVALS.map(([a, b, c, d]) => `<ellipse cx="${a}" cy="${b}" rx="${c}" ry="${d}"/>`).join('')}
${LINES.map(([a, b, c, d]) => `<path d="M${a} ${b}L${c} ${d}"/>`).join('')}
<path stroke-width="1.5" stroke="#333" d="M382 1007h3l1 1 1-1h3M386 1008v19M382 1027h3l1-1 1 1h3"/></svg>
<b class="l t"></b><b class="r t"></b><b class="l m"></b><b class="r m"></b>`);

define('paint-workspace', () => `<style>
  :host { flex: 1; min-height: 0; display: flex; flex-direction: column; position: relative; overflow: hidden; background: linear-gradient(90deg, #1f1f1e 0, #1f1f1e 20%, #1f202000 50%), linear-gradient(#1a1f2d 0, #1a1f2d 40%, #1e221c 80%); }
  .row { flex: 1; min-height: 0; display: flex; }
  .stage { flex: 1; min-width: 0; overflow: hidden; display: flex; padding: 40px 0 0 100px; align-items: flex-start; }
  .bar { width: 16px; flex: none; display: flex; flex-direction: column; align-items: center; padding: 7px 0 5px; background: #2a2d30; border-radius: 8px 0 0 8px; }
  .bar u { width: 10px; height: 753px; flex: 0 1 auto; margin: 7px 0 auto; border-radius: 5px; background: #989c9e; }
  .bar s { border: 7px solid transparent; } .up { border-top: 0 !important; border-bottom: 11px solid #989c9e !important; } .dn { border-bottom: 0 !important; border-top: 11px solid #989c9e !important; }
  text-toolbar { position: absolute; left: 638px; top: 1px; }
</style>
<paint-ruler origin="100" mark="356"></paint-ruler>
<div class="row"><paint-ruler vertical origin="40" mark="665"></paint-ruler><div class="stage"><paint-canvas></paint-canvas></div><div class="bar"><s class="up"></s><u></u><s class="dn"></s></div></div>
<text-toolbar></text-toolbar>`);

/* ---------- status bar ---------- */
define('status-bar', () => `<style>${BASE}
  :host { display: flex; align-items: center; box-sizing: border-box; height: 62px; flex: none; padding: 3px 18px 0 24px; background: linear-gradient(90deg, #1f1f1e, #1f231c 40%, #1f211d); border-bottom: 1px solid #43473f; --pick: #2b2e2a; }
  .pos { display: flex; align-items: center; gap: 14px; width: 193px; }
  i { width: 1px; height: 40px; background: #2a2b28; flex: none; }
  .sel { width: 216px; padding-left: 20px; display: flex; } .dim { display: flex; gap: 12px; align-items: center; flex: 1; padding-left: 21px; }
  pick-list { width: 147px; height: 46px; margin: 0 26px; }
  input { appearance: none; width: 208px; height: 34px; margin: 0 20px 0 19px; background: none; }
  input::-webkit-slider-runnable-track { height: 7px; border-radius: 4px; background: linear-gradient(90deg, #62b8f0 0 30px, #989b94 30px); }
  input::-webkit-slider-thumb { appearance: none; width: 34px; height: 34px; margin-top: -14px; border-radius: 50%; background: radial-gradient(circle, #62b8f8 8px, #454548 9px); }
</style>
<div class="pos"><ui-icon name="cursor"></ui-icon><span>201, 488px</span></div><i></i>
<div class="sel"><ui-icon name="selsmall"></ui-icon></div><i></i>
<div class="dim"><ui-icon name="dims"></ui-icon><span>1737 × 738px</span></div>
<ui-icon name="focus"></ui-icon><pick-list label="Zoom level" value="100%"></pick-list>
<ui-icon name="zout" width="24"></ui-icon><input type="range" aria-label="Zoom" min="0" max="100" value="8"><ui-icon name="zin" width="24"></ui-icon>`);

/* ---------- taskbar ---------- */
define('task-app', el => `<style>${BASE}
  :host { display: grid; width: 70px; height: 64px; justify-items: center; align-items: center; }
  button, em { grid-area: 1/1; } button { width: 64px; height: 64px; border-radius: 8px; }
  em { align-self: end; width: 10px; height: 5px; border-radius: 3px; margin-bottom: 1px; background: #93998e; display: none; }
  :host([open]) em { display: block; } :host([active]) em { width: 26px; background: #5fb2e6; }
  :host([active]) button { background: #ffffff14; border: 1px solid #ffffff10; }
</style><button aria-label="${el.getAttribute('label')}"><ui-icon name="${el.getAttribute('icon')}" width="${el.getAttribute('size') || 40}"></ui-icon></button><em></em>`);

define('task-bar', () => `<style>${BASE}
  :host { display: grid; grid-template-columns: 1fr auto 1fr; align-items: center; height: 76px; flex: none; padding-right: 2px; color: #f0f0ee;
    background: linear-gradient(90deg, #2c2a28 0, #2a2b26 13%, #1d2c17 24%, #1b2d14 78%, #1f2a20 88%, #20282b 100%); }
  .weather { display: flex; align-items: center; gap: 5px; padding-left: 28px; line-height: 26px; } .weather span { display: block; }
  .haze { color: #c9c8c5; }
  .apps { display: flex; align-items: center; }
  .search { display: flex; align-items: center; width: 350px; height: 52px; margin: 0 4px 0 5px; padding: 0 7px 0 18px; border-radius: 26px; background: #3c4d37; border: 1px solid #4c5c47; font-size: 20px; }
  .search input { flex: 1; min-width: 0; background: none; border: 0; outline: 0; padding: 0 0 0 13px; } .search input::placeholder { color: #c6cbc3; opacity: 1; }
  .tray { display: flex; align-items: center; justify-content: flex-end; padding-right: 31px; line-height: 26px; }
  .lang { text-align: center; margin: 0 27px 0 29px; } .net { display: flex; gap: 11px; align-items: center; margin-right: 25px; }
  .clock { text-align: right; margin-right: 13px; font-size: 19px; }
  .tray > ui-icon + ui-icon { margin-left: 29px; }
</style>
<div class="weather"><ui-icon name="haze"></ui-icon><div><span>28°C</span><span class="haze">Haze</span></div></div>
<div class="apps"><task-app icon="windows" size="38" label="Start"></task-app>
  <div class="search"><ui-icon name="search"></ui-icon><input type="search" placeholder="Search" aria-label="Search"><ui-icon name="shelf"></ui-icon></div>
  <task-app icon="copilot" label="Copilot"></task-app><task-app icon="taskview" label="Task view"></task-app><task-app icon="teams" label="Teams"></task-app>
  <task-app icon="folder" label="File Explorer"></task-app><task-app icon="edge" label="Edge"></task-app><task-app icon="store" label="Store"></task-app>
  <task-app icon="ell" label="Lenovo"></task-app><task-app icon="mcafee" label="McAfee"></task-app><task-app icon="alexa" label="Alexa"></task-app>
  <task-app icon="wps" label="WPS"></task-app><task-app icon="chrome" size="48" label="Chrome" open></task-app><task-app icon="settings" label="Settings" open></task-app>
  <task-app icon="palette" label="Paint" open active></task-app></div>
<div class="tray"><ui-icon name="caret"></ui-icon><ui-icon name="cloud"></ui-icon><ui-icon name="mic"></ui-icon>
  <div class="lang">ENG<br>US</div><div class="net"><ui-icon name="wifi"></ui-icon><ui-icon name="vol"></ui-icon><ui-icon name="bat"></ui-icon></div>
  <div class="clock">14:03<br>10-12-2023</div><ui-icon name="bell"></ui-icon></div>`);
</script>
</body>
</html>
